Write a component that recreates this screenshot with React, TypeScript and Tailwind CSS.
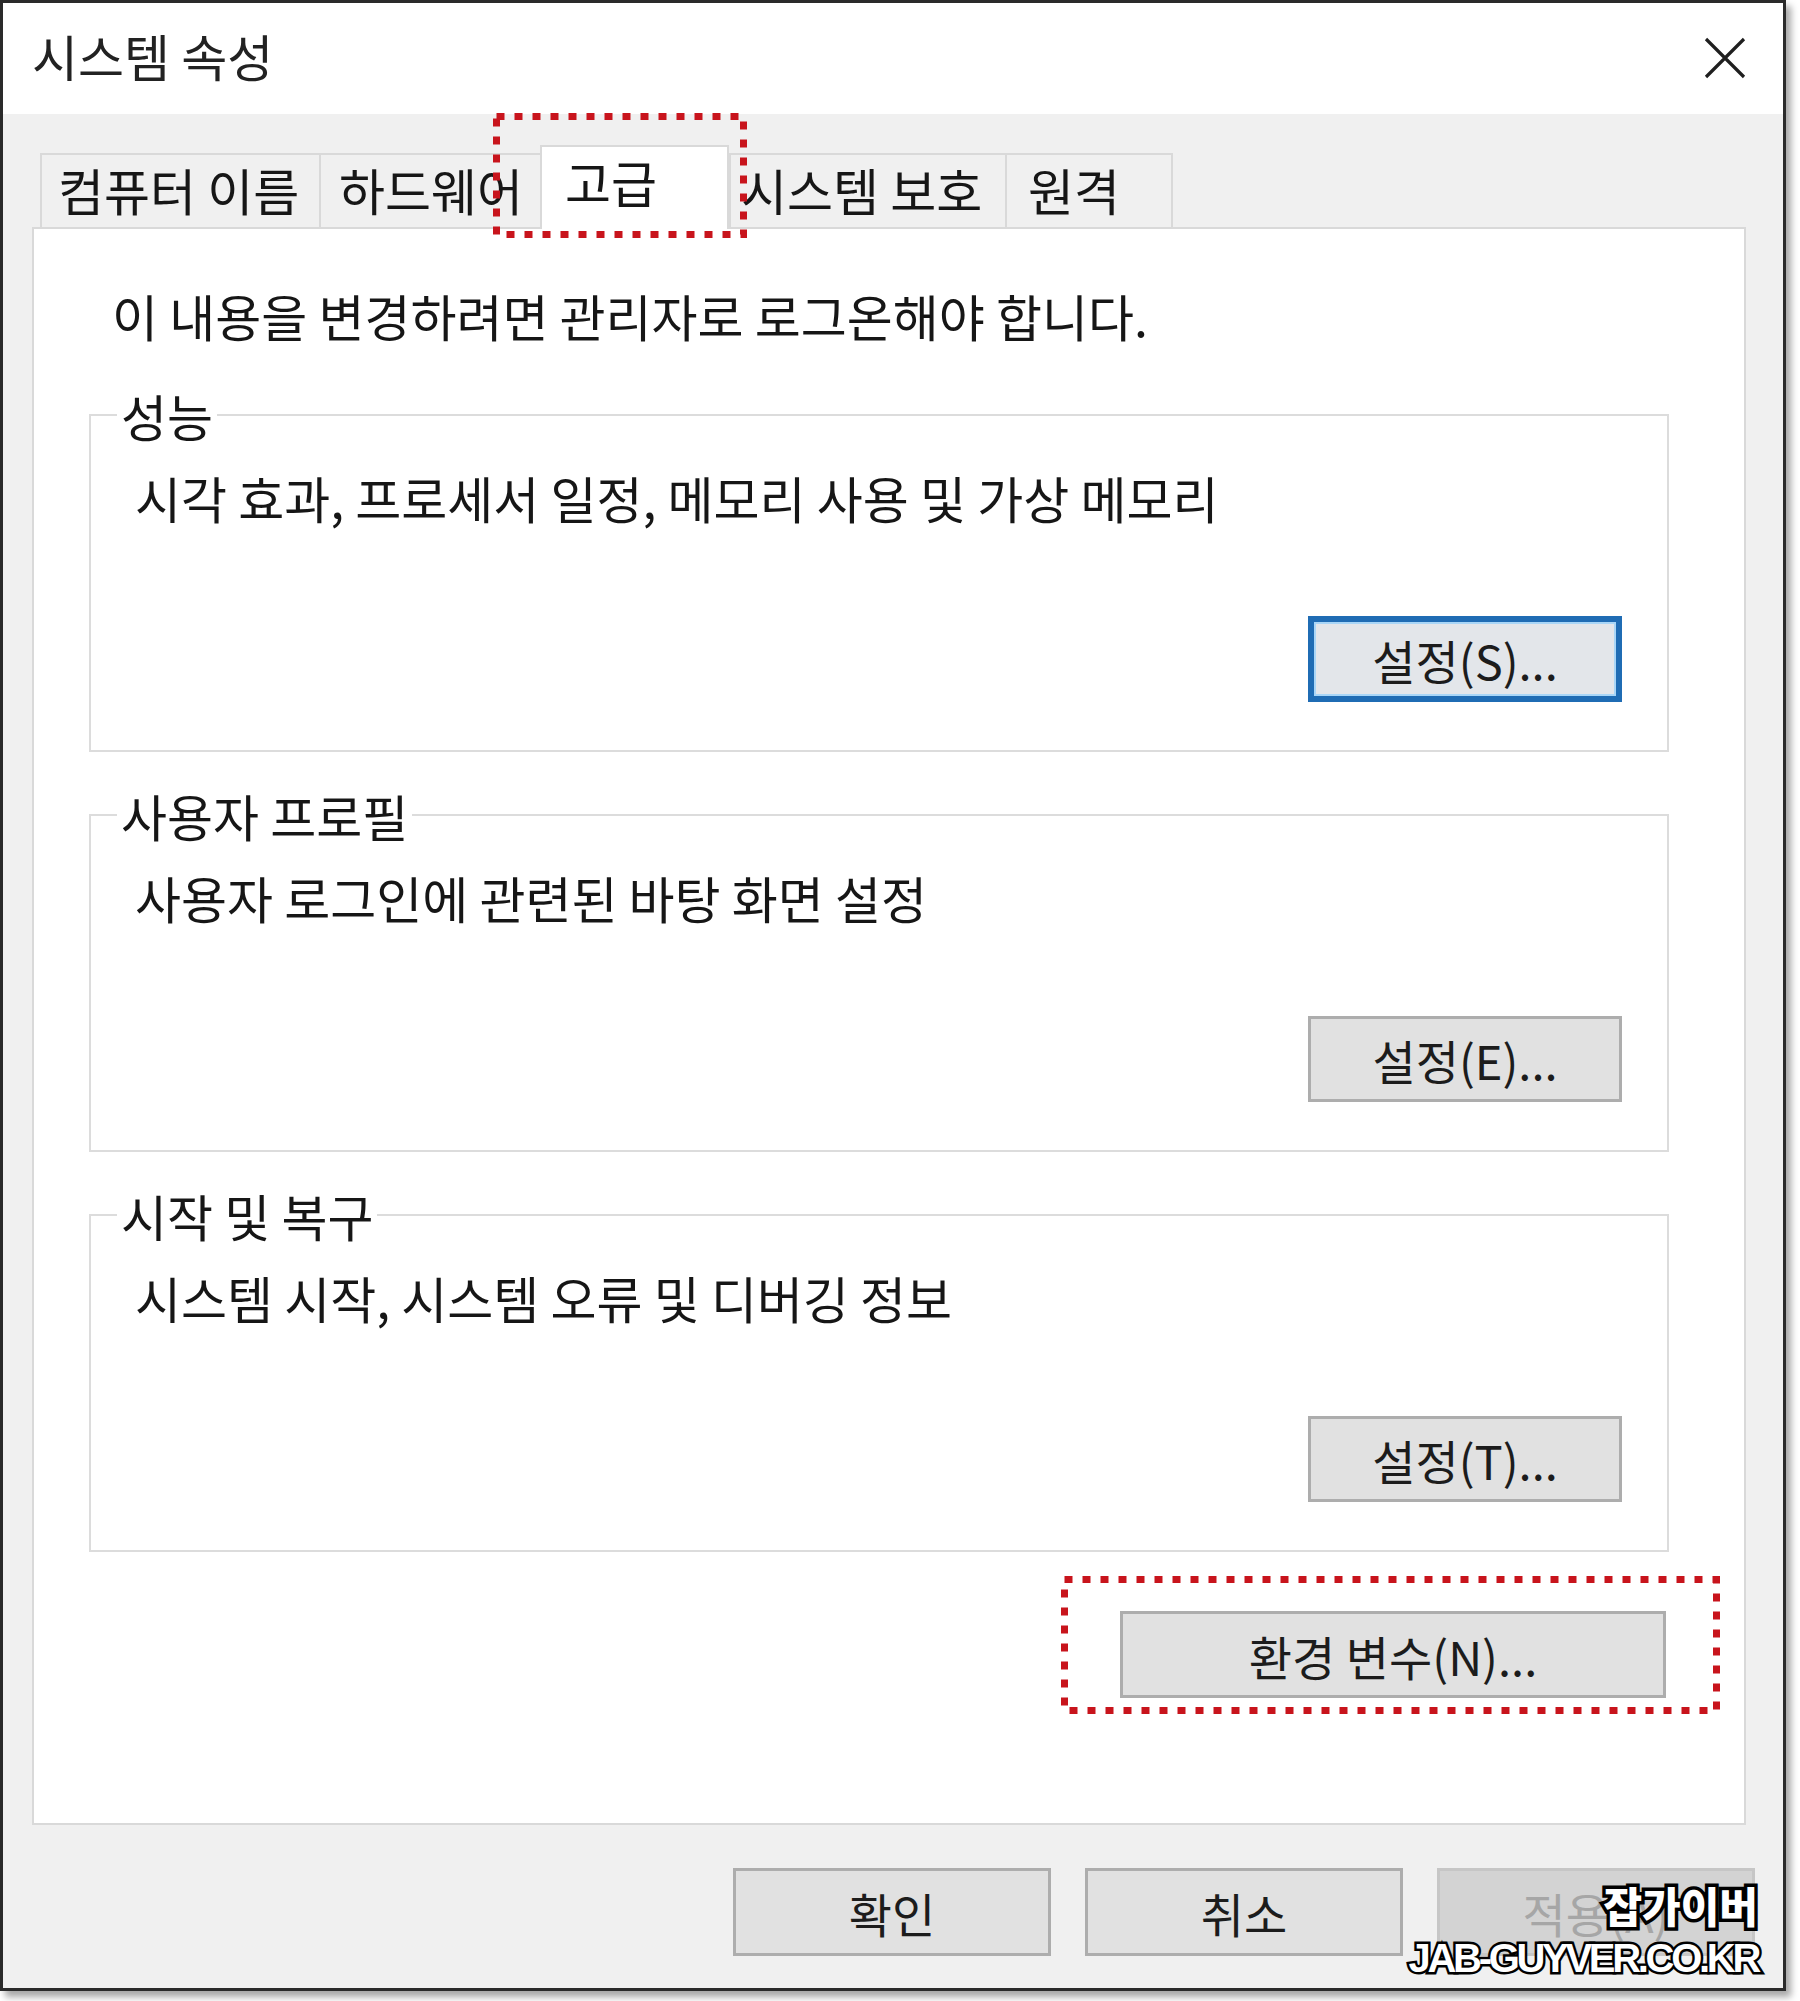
import React from 'react';

const tabs = [
  { label: '컴퓨터 이름', box: 'w-[279px] h-[74px] pl-[16px] pb-[4px]', active: false },
  { label: '하드웨어', box: 'w-[221px] h-[74px] pl-[18px] pb-[4px]', active: false },
  { label: '고급', box: 'w-[189px] h-[84px] pl-[23px] pb-[14px]', active: true },
  { label: '시스템 보호', box: 'w-[276px] h-[74px] pl-[10px] pb-[4px]', active: false },
  { label: '원격', box: 'w-[168px] h-[74px] pl-[21px] pb-[4px]', active: false },
];

const groups = [
  { title: '성능', text: '시각 효과, 프로세서 일정, 메모리 사용 및 가상 메모리', button: '설정(S)...', focused: true },
  { title: '사용자 프로필', text: '사용자 로그인에 관련된 바탕 화면 설정', button: '설정(E)...', focused: false },
  { title: '시작 및 복구', text: '시스템 시작, 시스템 오류 및 디버깅 정보', button: '설정(T)...', focused: false },
];

function CloseIcon() {
  return (
    <svg width="44" height="44" viewBox="0 0 44 44" fill="none">
      <path d="M3 3L41 41M41 3L3 41" stroke="#1f1f1f" strokeWidth="3.2" />
    </svg>
  );
}

function DottedBox({ w, h }: { w: number; h: number }) {
  return (
    <svg width={w} height={h} viewBox={`0 0 ${w} ${h}`} fill="none">
      <rect x="3.5" y="3.5" width={w - 7} height={h - 7} stroke="#c8141c" strokeWidth="7" strokeDasharray="8 10" />
    </svg>
  );
}

function WinButton({ label, focused, disabled, className }: { label: string; focused?: boolean; disabled?: boolean; className: string }) {
  if (focused) {
    return (
      <div className={`${className} flex items-center justify-center bg-[#e3e6ea] border-[6px] border-[#1f6cb4] shadow-[inset_0_0_0_2px_#a9d6f7] text-[#1c1c1c]`}>
        <span className="text-[47px] leading-[56px] pt-[2px]">{label}</span>
      </div>
    );
  }
  if (disabled) {
    return (
      <div className={`${className} flex items-center justify-center bg-[#d3d3d3] border-[3px] border-[#c6c6c6] text-[#a6a6a6]`}>
        <span className="text-[47px] leading-[56px] pt-[2px]">{label}</span>
      </div>
    );
  }
  return (
    <div className={`${className} flex items-center justify-center bg-[#e1e1e1] border-[3px] border-[#adadad] text-[#1c1c1c]`}>
      <span className="text-[47px] leading-[56px] pt-[2px]">{label}</span>
    </div>
  );
}

export default function App() {
  return (
    <div className="relative w-[1800px] h-[2001px] bg-white overflow-hidden font-['Noto_Sans_CJK_KR','Malgun_Gothic',sans-serif] text-[50px] text-[#161616]">
      <div className="w-[1786px] h-[1991px] border-[3px] border-[#2a2a2a] bg-[#f0f0f0] shadow-[5px_6px_7px_rgba(0,0,0,0.35)] flex flex-col">
        {/* title bar */}
        <div className="h-[111px] bg-white flex items-center justify-between pl-[29px] pr-[36px] pb-[8px]">
          <span className="leading-[56px] text-[#222]">시스템 속성</span>
          <div className="pt-[6px]">
            <CloseIcon />
          </div>
        </div>

        {/* body */}
        <div className="flex-1 flex flex-col pl-[29px]">
          <div className="mt-[31px] ml-[8px] h-[82px] flex items-end">
            {tabs.map((t) =>
              t.active ? (
                <div key={t.label} className={`${t.box} relative z-10 -mb-[2px] bg-white border-2 border-b-0 border-[#d9d9d9] flex items-center`}>
                  <span className="leading-[56px] whitespace-nowrap">{t.label}</span>
                </div>
              ) : (
                <div key={t.label} className={`${t.box} bg-[#f0f0f0] border-2 border-b-0 border-r-0 last:border-r-2 border-[#d9d9d9] flex items-center`}>
                  <span className="leading-[56px] whitespace-nowrap">{t.label}</span>
                </div>
              )
            )}
          </div>

          <div className="w-[1714px] h-[1598px] bg-white border-2 border-[#d9d9d9] flex flex-col">
            <p className="mt-[58px] pl-[78px] leading-[56px]">이 내용을 변경하려면 관리자로 로그온해야 합니다.</p>

            <div className="mt-[44px] ml-[55px] flex flex-col gap-[35px]">
              {groups.map((g) => (
                <fieldset key={g.title} className="w-[1580px] h-[365px] border-2 border-[#dcdcdc] flex flex-col">
                  <legend className="ml-[26px] px-[4px] leading-[56px]">{g.title}</legend>
                  <p className="mt-[26px] pl-[44px] leading-[56px]">{g.text}</p>
                  <div className="mt-[91px] flex justify-end pr-[45px]">
                    <WinButton label={g.button} focused={g.focused} className="w-[314px] h-[86px]" />
                  </div>
                </fieldset>
              ))}
            </div>

            <div className="mt-[59px] flex justify-end pr-[78px]">
              <WinButton label="환경 변수(N)..." className="w-[546px] h-[87px]" />
            </div>
          </div>

          <div className="mt-[43px] flex justify-end gap-[34px] pr-[28px]">
            <WinButton label="확인" className="w-[318px] h-[88px]" />
            <WinButton label="취소" className="w-[318px] h-[88px]" />
            <WinButton label="적용(A)" disabled className="w-[318px] h-[88px]" />
          </div>
        </div>
      </div>

      {/* red annotation boxes */}
      <div className="absolute left-[493px] top-[113px] z-20">
        <DottedBox w={254} h={125} />
      </div>
      <div className="absolute left-[1061px] top-[1576px] z-20">
        <DottedBox w={659} h={138} />
      </div>

      {/* watermark */}
      <div className="absolute right-[42px] top-[1881px] z-30 flex flex-col items-end text-white">
        <span className="text-[42px] leading-[48px] font-black [-webkit-text-stroke:7px_#000] [paint-order:stroke_fill]">잡가이버</span>
        <span className="mt-[9px] text-[40px] leading-[40px] font-bold tracking-[-3.3px] font-['Liberation_Sans',sans-serif] [-webkit-text-stroke:5px_#000] [paint-order:stroke_fill]">JAB-GUYVER.CO.KR</span>
      </div>
    </div>
  );
}
